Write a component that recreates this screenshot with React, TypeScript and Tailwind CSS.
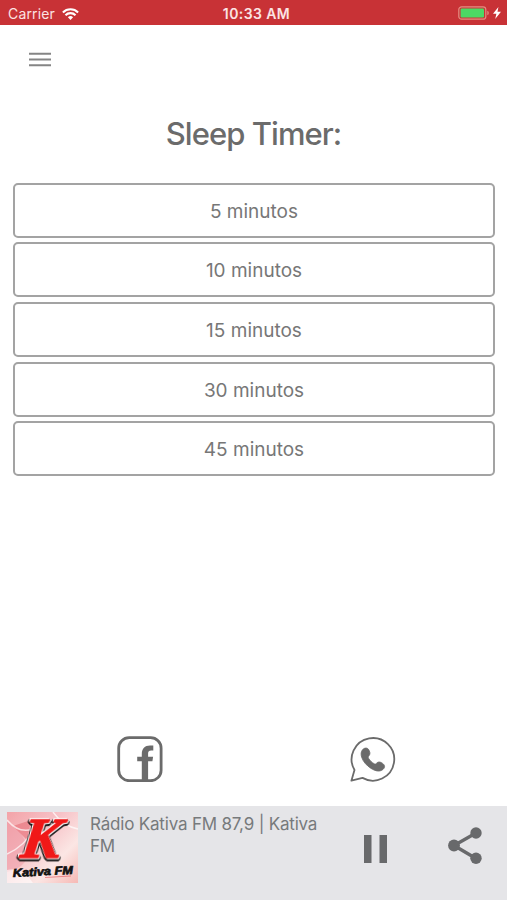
import type { ReactNode } from 'react';

const options = ['5 minutos', '10 minutos', '15 minutos', '30 minutos', '45 minutos'];

function StatusBar() {
  return (
    <header className="grid h-[25px] grid-cols-3 items-center bg-[#c83236] text-[#fbe3e3]">
      <div className="flex items-center gap-[7px] pl-2 pt-0.5">
        <span className="text-[14px] leading-5 tracking-[0.15px]">Carrier</span>
        <svg className="h-3 w-[17px]" viewBox="0 0 17 12" fill="none" stroke="#fff" strokeWidth="2.1">
          <path d="M0.9 4.4a10.8 10.8 0 0 1 15.2 0" />
          <path d="M3.5 7.2a7 7 0 0 1 10 0" />
          <path d="M8.5 12 5.9 9.3a3.7 3.7 0 0 1 5.2 0z" fill="#fff" stroke="none" />
        </svg>
      </div>
      <span className="pt-0.5 pl-1.5 text-center text-[14px] font-semibold leading-5 tracking-[0.4px]">10:33 AM</span>
      <div className="flex items-center justify-end gap-1 pr-[6px]">
        <svg className="h-[14px] w-8" viewBox="0 0 32 14">
          <rect x="1.8" y="0.8" width="27" height="12.4" rx="2.8" fill="none" stroke="#e38d80" strokeWidth="1.2" />
          <rect x="3.6" y="2.6" width="23.4" height="8.8" rx="1.2" fill="#4cd964" />
          <path d="M30.3 4.8q1.5 .5 1.5 2.2t-1.5 2.2z" fill="#e38d80" />
        </svg>
        <svg className="h-3 w-2" viewBox="0 0 8 12" fill="#fff">
          <path d="M5.4 0 0 6.8h3.4L2.2 12 8 4.8H4.5z" />
        </svg>
      </div>
    </header>
  );
}

interface IconButtonProps {
  label: string;
  className?: string;
  children: ReactNode;
}

function IconButton({ label, className, children }: IconButtonProps) {
  return (
    <button type="button" aria-label={label} className={className}>
      {children}
    </button>
  );
}

function StationLogo() {
  return (
    <svg className="h-[71px] w-[71px] shrink-0" viewBox="0 0 71 71">
      <defs>
        <linearGradient id="cover" x1="0" y1="0" x2="1" y2="1">
          <stop offset="0" stopColor="#f3a3a8" />
          <stop offset="0.4" stopColor="#f7c3c8" />
          <stop offset="0.7" stopColor="#fbe6e4" />
          <stop offset="1" stopColor="#f6b9b5" />
        </linearGradient>
      </defs>
      <rect width="71" height="71" fill="url(#cover)" />
      <path d="M0 10q16 8 20 26T0 60z" fill="#ee98a4" opacity="0.5" />
      <path d="M6 14 24 8 20 28z" fill="#e35f69" opacity="0.5" />
      <path d="M0 58q16-4 26 13H0z" fill="#fff" opacity="0.6" />
      <path d="M0 8q12 14 26 9M46 0q10 14 25 17M0 42q18-8 26-24" fill="none" stroke="#fff" strokeWidth="1.5" opacity="0.7" />
      <text
        className="[filter:drop-shadow(1px_1px_0_#fff)_drop-shadow(-1px_-1px_0_#fff)_drop-shadow(1.5px_1.5px_0_#111)_drop-shadow(-1px_1px_0_#111)]"
        transform="translate(8 0) skewX(-8)"
        x="11"
        y="46"
        textLength="39"
        lengthAdjust="spacingAndGlyphs"
        fontFamily="Liberation Serif, serif"
        fontWeight="bold"
        fontStyle="italic"
        fontSize="56"
        fill="#f01818"
        stroke="#f01818"
        strokeWidth="1.6"
        strokeLinejoin="round"
      >
        K
      </text>
      <text
        transform="rotate(-3 6 64)"
        x="6"
        y="65"
        textLength="60"
        lengthAdjust="spacingAndGlyphs"
        fontFamily="Liberation Sans, sans-serif"
        fontWeight="bold"
        fontStyle="italic"
        fontSize="11.5"
        fill="#111"
        stroke="#111"
        strokeWidth="0.7"
      >
        Kativa FM
      </text>
      <path d="M38 65.5 64 64" stroke="#e5656b" strokeWidth="1" opacity="0.7" />
    </svg>
  );
}

function Player() {
  return (
    <footer className="flex h-[94px] bg-[#e5e5e8] pl-[7px] pt-[6px]">
      <StationLogo />
      <p className="ml-3 w-[240px] pt-px text-[17px] leading-[22px] tracking-[-0.19px] text-[#777a7c]">
        Rádio Kativa FM 87,9 | Kativa FM
      </p>
      <IconButton label="Pause" className="ml-[34px] mt-[23px] h-7 w-[23px]">
        <svg className="h-7 w-[23px]" viewBox="0 0 23 28" fill="#68696b">
          <path d="M0 0h7.5v28H0zM15.5 0H23v28h-7.5z" />
        </svg>
      </IconButton>
      <IconButton label="Share" className="ml-[61px] mt-[15px] h-[37px] w-[34px]">
        <svg className="h-[37px] w-[34px]" viewBox="0 0 34 37" fill="#68696b">
          <path d="M28 6 6 18.5 28 31.5" fill="none" stroke="#68696b" strokeWidth="3.4" />
          <circle cx="28" cy="6" r="5.7" />
          <circle cx="6" cy="18.5" r="5.9" />
          <circle cx="28" cy="31.3" r="5.7" />
        </svg>
      </IconButton>
    </footer>
  );
}

export default function App() {
  return (
    <div className="flex h-[900px] w-[507px] flex-col bg-white font-['Inter','Liberation_Sans',sans-serif]">
      <StatusBar />
      <IconButton label="Menu" className="ml-[29px] mt-[27px] h-[15px] w-[22px]">
        <svg className="h-[15px] w-[22px]" viewBox="0 0 22 15" fill="#858585">
          <path d="M0 .8h22v2H0zM0 6.6h22v2H0zM0 12.2h22v2H0z" />
        </svg>
      </IconButton>
      <h1 className="mt-[47px] text-center text-[31px] font-medium leading-10 tracking-[-0.95px] text-[#6b6b6b]">
        Sleep Timer:
      </h1>
      <ul className="ml-[13px] mr-3 mt-[28.5px] flex flex-col gap-[4.7px]">
        {options.map((option) => (
          <li key={option} className="h-[55px]">
            <button
              type="button"
              className="block h-[55px] w-full rounded-[5px] border-2 border-[#a3a3a3] pt-[3px] text-[19px] leading-6 text-[#777]"
            >
              {option}
            </button>
          </li>
        ))}
      </ul>
      <div className="mt-auto mb-6 flex justify-between pl-[117px] pr-[111px]">
        <IconButton label="Facebook" className="h-[46px] w-[46px]">
          <svg className="h-[46px] w-[46px]" viewBox="0 0 46 46">
            <rect x="1.7" y="1.7" width="42.4" height="43" rx="10.5" fill="none" stroke="#6b6b6b" strokeWidth="2.8" />
            <path d="M24.8 45V25.2h-4.6v-4.4h4.6v-2.6c0-5.600 3-8.600 8.200-8.600h3.300v4.900h-2.100c-2.200 0-3.100 1-3.100 2.900v3.400h5l-.7 4.400h-4.300V45z" fill="#6b6b6b" />
          </svg>
        </IconButton>
        <IconButton label="WhatsApp" className="h-[46px] w-[46px]">
          <svg className="h-[46px] w-[46px]" viewBox="0 0 46 46">
            <path d="M1.4 44.7 4.5 34A21.3 21.3 0 1 1 12.5 41.9z" fill="none" stroke="#6b6b6b" strokeWidth="1.8" strokeLinejoin="round" />
            <path
              d="M12.5 13.8c1.500-1.800 4.200-2.500 5.900-.6 1.500 2.500 2.300 4.500.6 6.500-.9 1-1 1.700-.3 2.800 1.300 2.200 3.200 4 5.400 5.200 1 .6 1.700.4 2.500-.5 1.500-1.700 3.500-1.600 6 .2 2.600 1.800 2.500 4.200.4 6-3.300 2.700-7.300 1.900-12-1-4.500-2.900-8-6.900-9.400-11.300-.8-2.800-.7-5.300.9-7.300z"
              fill="#6b6b6b"
              stroke="#6b6b6b"
              strokeWidth="0.8"
            />
          </svg>
        </IconButton>
      </div>
      <Player />
    </div>
  );
}
